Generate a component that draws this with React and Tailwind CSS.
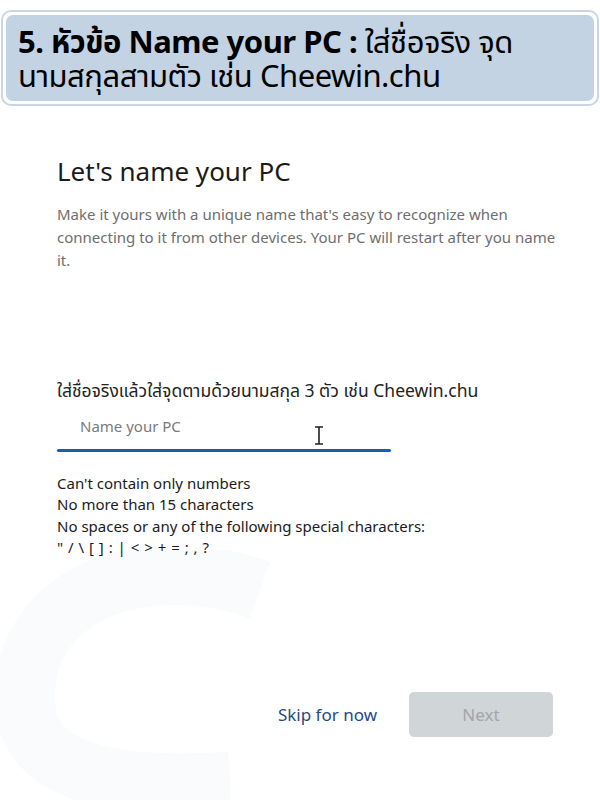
import React from 'react';

const Banner = () => (
  <div className="mt-[10px] mx-[1px] border-2 border-[#c9d6e6] rounded-[10px] p-[3px] bg-white">
    <div className="h-[86px] bg-[#c3d3e4] rounded-[7px] pl-[12px] pt-[9px] text-[31px] leading-[34px] tracking-[-0.5px] text-black" style={{ fontFamily: '"Noto Sans", "Noto Sans Thai", sans-serif' }}>
      <span className="font-bold">5. หัวข้อ Name your PC :</span> ใส่ชื่อจริง จุด
      <br />
      นามสกุลสามตัว เช่น Cheewin.chu
    </div>
  </div>
);

const IBeam = () => (
  <svg width="12" height="19" viewBox="0 0 12 19" className="absolute left-[256px] top-[10px]">
    <path d="M2 1h8M2 18h8M6 1v17" stroke="#222" strokeWidth="1.6" fill="none" />
  </svg>
);

const Watermark = () => (
  <svg width="320" height="260" viewBox="0 0 320 260" className="absolute left-0 top-[550px] pointer-events-none">
    <path d="M260 40 C150 0 30 40 25 140 C20 215 90 240 230 232" stroke="#fafbfc" strokeWidth="60" fill="none" />
  </svg>
);

export default function App() {
  return (
    <div className="relative w-[600px] h-[800px] bg-white overflow-hidden" style={{ fontFamily: '"Segoe UI", "Noto Sans", sans-serif' }}>
      <Watermark />
      <div className="relative">
        <Banner />
        <div className="px-[57px]">
          <h1 className="mt-[48px] text-[26px] leading-[34px] text-[#1b1b1b]">Let's name your PC</h1>
          <p className="mt-[15px] w-[510px] text-[15px] leading-[23px] text-[#6e6e6e]">
            Make it yours with a unique name that's easy to recognize when connecting to it from other devices. Your PC will restart after you name it.
          </p>
          <div className="mt-[106px] text-[17.5px] leading-[24px] text-[#222] whitespace-nowrap" style={{ fontFamily: '"Noto Sans", "Noto Sans Thai", sans-serif' }}>
            ใส่ชื่อจริงแล้วใส่จุดตามด้วยนามสกุล 3 ตัว เช่น Cheewin.chu
          </div>
          <div className="relative mt-[14px] w-[334px]">
            <div className="pl-[23px] h-[33px] text-[15px] leading-[20px] text-[#7a7a7a]">Name your PC</div>
            <IBeam />
            <div className="h-[3px] bg-[#1c5ea6] rounded-full"></div>
          </div>
          <div className="mt-[21px] text-[15px] leading-[21.3px] text-[#1b1b1b]">
            <div>Can't contain only numbers</div>
            <div>No more than 15 characters</div>
            <div>No spaces or any of the following special characters:</div>
            <div className="[word-spacing:1px]">" / \ [ ] : | &lt; &gt; + = ; , ?</div>
          </div>
        </div>
        <div className="flex items-center justify-end gap-[32px] pr-[47px] mt-[134px]">
          <button className="text-[17px] text-[#1f4a86]">Skip for now</button>
          <button className="w-[144px] h-[45px] rounded-[5px] bg-[#d0d5d8] text-[17px] text-[#a2a6a9]">Next</button>
        </div>
      </div>
    </div>
  );
}
